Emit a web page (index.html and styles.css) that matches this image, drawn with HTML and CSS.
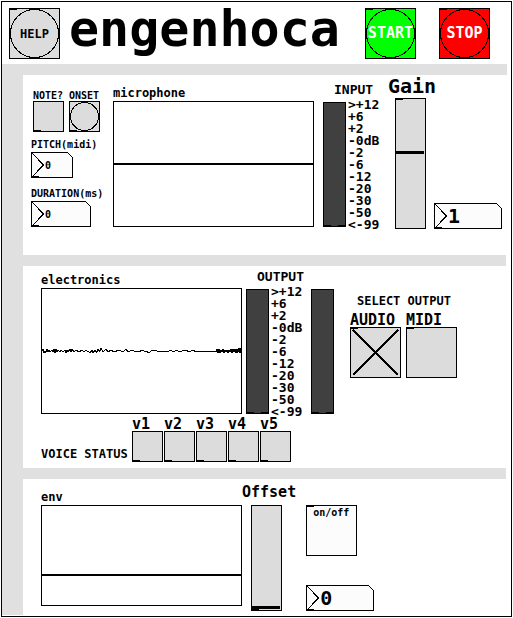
FILE: index.html
```html
<!DOCTYPE html>
<html lang="en">
<head>
<meta charset="utf-8">
<title>engenhoca</title>
<link rel="stylesheet" href="styles.css">
</head>
<body>
<div class="patch">
  <header class="header">
    <button class="bang bang-large mark-top">
      <svg class="ring" viewBox="0 0 49 49"><circle cx="24.5" cy="24.5" r="24"/></svg>
      <span class="text-12">HELP</span>
    </button>
    <h1 class="title">engenhoca</h1>
    <div class="transport">
      <button class="bang bang-large mark-top start">
        <svg class="ring" viewBox="0 0 49 49"><circle cx="24.5" cy="24.5" r="24"/></svg>
        <span class="text-15">START</span>
      </button>
      <button class="bang bang-large mark-top stop">
        <svg class="ring" viewBox="0 0 49 49"><circle cx="24.5" cy="24.5" r="24"/></svg>
        <span class="text-15">STOP</span>
      </button>
    </div>
  </header>

  <main class="panels">
    <section class="panel panel-input">
      <div class="sensors">
        <div class="detectors">
          <div class="field">
            <label class="text-10" for="note">NOTE?</label>
            <input class="toggle toggle-small mark-bottom" type="checkbox" id="note">
          </div>
          <div class="field">
            <label class="text-10" for="onset">ONSET</label>
            <button class="bang bang-small mark-bottom" id="onset" aria-label="ONSET">
              <svg class="ring" viewBox="0 0 29 29"><circle cx="14.5" cy="14.5" r="14"/></svg>
            </button>
          </div>
        </div>
        <label class="text-10 reading-label" for="pitch">PITCH(midi)</label>
        <div class="number number-short">
          <svg class="number-shape" viewBox="0 0 42 26"><path class="face" d="M.5 .5H36.500L41.500 5.500V25.500H.5Z"/><path d="M.5 .5L12.500 13L.5 25.500"/><path class="mark" d="M1 24h7v1H1z"/></svg>
          <input class="number-value text-10" type="text" id="pitch" value="0">
        </div>
        <label class="text-10 reading-label duration-label" for="duration">DURATION(ms)</label>
        <div class="number number-medium">
          <svg class="number-shape" viewBox="0 0 60 26"><path class="face" d="M.5 .5H54.500L59.500 5.500V25.500H.5Z"/><path d="M.5 .5L12.500 13L.5 25.500"/><path class="mark" d="M1 24h7v1H1z"/></svg>
          <input class="number-value text-10" type="text" id="duration" value="0">
        </div>
      </div>

      <figure class="scope scope-input">
        <figcaption class="text-12">microphone</figcaption>
        <svg class="screen" viewBox="0 0 201 126"><path class="trace" d="M0 63H201"/></svg>
      </figure>

      <div class="levels levels-input">
        <div class="text-13 levels-label">INPUT</div>
        <div class="levels-row">
          <div class="vu" role="meter" aria-label="Input level" aria-valuenow="-99" aria-valuemin="-99" aria-valuemax="12"></div>
          <ul class="scale">
            <li>&gt;+12</li><li>+6</li><li>+2</li><li>-0dB</li><li>-2</li><li>-6</li><li>-12</li><li>-20</li><li>-30</li><li>-50</li><li>&lt;-99</li>
          </ul>
        </div>
      </div>

      <div class="gain">
        <label class="gain-label" for="gain">Gain</label>
        <div class="gain-row">
          <input class="slider slider-tall mark-top" type="range" id="gain" min="0" max="100" value="59">
          <div class="number number-long">
            <svg class="number-shape" viewBox="0 0 68 26"><path class="face" d="M.5 .5H62.500L67.500 5.500V25.500H.5Z"/><path d="M.5 .5L12.500 13L.5 25.500"/><path class="mark" d="M1 24h7v1H1z"/></svg>
            <input class="number-value text-20" type="text" value="1" aria-label="Gain value">
          </div>
        </div>
      </div>
    </section>

    <section class="panel panel-output">
      <div class="synth">
        <div class="monitor">
          <figure class="scope scope-output">
            <figcaption class="text-12">electronics</figcaption>
            <svg class="screen" viewBox="0 0 201 126"><path class="noise" d="M1 62.500L2 61.500 3 64.500 4 63.500 5 64.500 6 61.500 7 63.500 8 62.500 9 63.500 11 62.500 12 63.500 13 61.500 14 64.500 15 61.500 16 63.500 17 62.500 19 63.500 20 62.500 22 63.500 24 62.500 25 64.500 26 62.500 27 63.500 29 61.500 30 63.500 31 61.500 33 63.500 35 62.500 38 63.500 41 62.500 43 63.500 45 62.500 47 63.500 49 64.500 51 62.500 52 64.500 54 62.500 56 64.500 57 61.500 59 63.500 60 60.500 62 63.500 65 61.500 67 63.500 70 62.500 73 63.500 78 62.500 82 63.500 85 61.500 87 63.500 91 62.500 95 63.500 98 63.500 101 62.500 105 63.500 108 64.500 111 62.500 114 62.500 118 63.500 126 63.500 130 62.500 132 63.500 136 62.500 138 63.500 145 62.500 148 63.500 152 62.500 155 63.500 175 63.500 176 61.500 177 64.500 178 61.500 179 64.500 180 62.500 181 63.500 182 61.500 183 64.500 184 62.500 185 63.500 186 62.500 187 64.500 188 62.500 189 63.500 190 61.500 191 64.500 192 61.500 193 63.500 194 61.500 195 64.500 196 61.500 197 64.500 198 60.500 199 64.500 200 60.500"/></svg>
          </figure>
          <div class="levels levels-output">
            <div class="text-13 levels-label">OUTPUT</div>
            <div class="levels-row">
              <div class="vu" role="meter" aria-label="Left output level" aria-valuenow="-99" aria-valuemin="-99" aria-valuemax="12"></div>
              <ul class="scale">
                <li>&gt;+12</li><li>+6</li><li>+2</li><li>-0dB</li><li>-2</li><li>-6</li><li>-12</li><li>-20</li><li>-30</li><li>-50</li><li>&lt;-99</li>
              </ul>
              <div class="vu vu-right" role="meter" aria-label="Right output level" aria-valuenow="-99" aria-valuemin="-99" aria-valuemax="12"></div>
            </div>
          </div>
        </div>
        <div class="voices">
          <div class="text-12 voices-label">VOICE STATUS</div>
          <div class="field"><label class="text-15" for="v1">v1</label><input class="toggle toggle-small mark-bottom" type="checkbox" id="v1"></div>
          <div class="field"><label class="text-15" for="v2">v2</label><input class="toggle toggle-small mark-bottom" type="checkbox" id="v2"></div>
          <div class="field"><label class="text-15" for="v3">v3</label><input class="toggle toggle-small mark-bottom" type="checkbox" id="v3"></div>
          <div class="field"><label class="text-15" for="v4">v4</label><input class="toggle toggle-small mark-bottom" type="checkbox" id="v4"></div>
          <div class="field"><label class="text-15" for="v5">v5</label><input class="toggle toggle-small mark-bottom" type="checkbox" id="v5"></div>
        </div>
      </div>

      <div class="select-output">
        <div class="text-12 select-label">SELECT OUTPUT</div>
        <div class="select-row">
          <div class="field">
            <label class="text-15" for="audio">AUDIO</label>
            <div class="stack">
              <input class="toggle toggle-large mark-top" type="checkbox" id="audio" checked>
              <svg class="cross" viewBox="0 0 51 51"><path d="M3 3L48 48M48 3L3 48"/></svg>
            </div>
          </div>
          <div class="field">
            <label class="text-15" for="midi">MIDI</label>
            <div class="stack">
              <input class="toggle toggle-large mark-top" type="checkbox" id="midi">
              <svg class="cross" viewBox="0 0 51 51"><path d="M3 3L48 48M48 3L3 48"/></svg>
            </div>
          </div>
        </div>
      </div>
    </section>

    <section class="panel panel-env">
      <figure class="scope scope-env">
        <figcaption class="text-12">env</figcaption>
        <svg class="screen" viewBox="0 0 201 101"><path class="trace" d="M0 70H201"/></svg>
      </figure>
      <div class="offset">
        <label class="offset-label" for="offset">Offset</label>
        <input class="slider slider-short mark-bottom" type="range" id="offset" min="0" max="100" value="1">
      </div>
      <div class="env-controls">
        <div class="stack">
          <input class="toggle toggle-large toggle-light mark-top" type="checkbox" id="onoff">
          <label class="text-10 onoff-label" for="onoff">on/off</label>
        </div>
        <div class="number number-long">
          <svg class="number-shape" viewBox="0 0 68 26"><path class="face" d="M.5 .5H62.500L67.500 5.500V25.500H.5Z"/><path d="M.5 .5L12.500 13L.5 25.500"/><path class="mark" d="M1 24h7v1H1z"/></svg>
          <input class="number-value text-20" type="text" value="0" aria-label="Offset value">
        </div>
      </div>
    </section>
  </main>
</div>
</body>
</html>
```
FILE: styles.css
```css
* {
  box-sizing: border-box;
}

body {
  margin: 1px;
  background: #fff;
  color: #000;
  font-family: "DejaVu Sans Mono", "Liberation Mono", monospace;
  font-weight: bold;
}

button,
input {
  margin: 0;
  padding: 0;
  color: inherit;
  font-family: inherit;
  font-weight: inherit;
}

svg {
  display: block;
  shape-rendering: crispEdges;
}

.patch {
  border: 1px solid #000;
  padding-bottom: 1px;
}

/* Type sizes */
.text-10 { font-size: 10px; line-height: 11px; }
.text-12 { font-size: 12px; line-height: 14px; }
.text-13 { font-size: 13px; line-height: 16px; }
.text-15 { font-size: 15px; line-height: 13px; }
.text-20 { font-size: 20px; line-height: 24px; }

/* Header */
.header {
  display: flex;
  align-items: flex-start;
  padding: 0 7px;
}

.header .bang {
  margin: 6px 0 5px;
}

.title {
  margin: 0 25px 0 9px;
  font-size: 50px;
  line-height: 54px;
}

.transport {
  display: flex;
  gap: 23px;
}

/* Panels */
.panels {
  margin-right: 4px;
  border-left: 21px solid #e0e0e0;
}

.panel {
  display: flex;
  align-items: flex-start;
  border-top: 11px solid #e0e0e0;
}

.panel + .panel {
  margin-right: 1px;
  padding-left: 18px;
}

.panel-input { padding: 0 0 24px 8px; }
.panel-output { padding-bottom: 6px; }
.panel-env { padding-bottom: 4px; }

/* Widgets */
.bang,
.toggle,
.slider {
  appearance: none;
  flex: none;
  display: block;
  border: 1px solid #000;
  border-radius: 0;
  background-color: #dcdcdc;
  background-image: linear-gradient(#000, #000);
  background-repeat: no-repeat;
  background-size: 7px 1px;
}

.mark-top { background-position: left top; }
.mark-bottom { background-position: left bottom; }

.bang {
  display: grid;
  place-items: center;
}

.bang > * {
  grid-area: 1 / 1;
}

.bang-large,
.toggle-large {
  width: 51px;
  height: 51px;
}

.bang-small,
.toggle-small {
  width: 31px;
  height: 31px;
}

.start {
  background-color: #0f0;
  color: #fff;
}

.stop {
  background-color: #f00;
  color: #fff;
}

.ring {
  width: 100%;
  height: 100%;
  fill: none;
  stroke: #000;
}

.toggle-light {
  background-color: #fcfcfc;
}

.field {
  display: flex;
  flex-direction: column;
}

.stack {
  display: grid;
  justify-items: start;
  align-items: start;
}

.stack > * {
  grid-area: 1 / 1;
}

.cross {
  display: none;
  width: 51px;
  height: 51px;
  stroke: #000;
  stroke-width: 2;
  pointer-events: none;
}

.toggle:checked + .cross {
  display: block;
}

.slider {
  width: 31px;
  writing-mode: vertical-lr;
  direction: rtl;
}

.slider-tall { height: 131px; }
.slider-short { height: 106px; }

.slider::-webkit-slider-thumb {
  appearance: none;
  width: 28px;
  height: 3px;
  margin-right: 1px;
  background: #000;
}

.number {
  display: grid;
  height: 26px;
}

.number > * {
  grid-area: 1 / 1;
}

.number-short { width: 42px; }
.number-medium { width: 60px; }
.number-long { width: 68px; }

.number-shape {
  width: 100%;
  height: 26px;
  fill: none;
  stroke: #000;
}

.number-shape .face { fill: #fcfcfc; }

.number-shape .mark {
  fill: #000;
  stroke: none;
}

.number-value {
  width: 100%;
  height: 26px;
  padding-left: 14px;
  border: 0;
  background: transparent;
}

.scope {
  flex: none;
  display: grid;
  gap: 1px;
  margin: 0;
}

.screen {
  width: 201px;
  outline: 1px solid #000;
  outline-offset: -1px;
}

.trace {
  stroke: #000;
  stroke-width: 2;
}

.noise {
  fill: none;
  stroke: #000;
}

.levels-label {
  padding-left: 11px;
}

.levels-row {
  display: flex;
  align-items: flex-start;
  margin-top: 1px;
}

.vu {
  width: 23px;
  height: 125px;
  margin: 3px 2px 0 0;
  border: 1px solid #000;
  background:
    linear-gradient(#000, #000) left bottom / 7px 1px no-repeat,
    linear-gradient(#000, #000) right bottom / 7px 1px no-repeat,
    #404040;
}

.vu-right {
  margin: 3px 0 0 8px;
}

.scale {
  width: 32px;
  margin: 0;
  padding: 0;
  list-style: none;
  font-size: 13px;
  line-height: 12px;
  white-space: nowrap;
}

/* Input panel */
.sensors {
  width: 82px;
  margin-top: 15px;
}

.detectors {
  display: flex;
  gap: 5px;
  padding-left: 2px;
}

.reading-label {
  display: block;
  margin: 7px 0 2px;
}

.duration-label {
  margin-top: 10px;
}

.scope-input { margin-top: 11px; }
.levels-input { margin: 7px 8px 0 9px; }

.gain-label {
  display: block;
  font-size: 20px;
  line-height: 22px;
}

.gain-row {
  display: flex;
  align-items: flex-end;
  gap: 8px;
  margin: 1px 0 0 7px;
}

/* Output panel */
.monitor {
  display: flex;
  align-items: flex-start;
}

.scope-output { margin-top: 7px; }
.levels-output { margin: 3px 0 0 4px; }

.voices {
  display: flex;
  align-items: flex-end;
  gap: 1px;
}

.voices-label {
  width: 90px;
  margin-bottom: 1px;
}

.select-output { margin: 28px 0 0 16px; }

.select-label {
  padding-left: 7px;
  margin-bottom: 6px;
}

.select-row {
  display: flex;
  gap: 5px;
}

/* Envelope panel */
.scope-env { margin-top: 11px; }

.offset { margin: 5px 10px 0 0; }

.offset-label {
  display: block;
  margin-bottom: 5px;
  font-size: 15px;
  line-height: 16px;
}

.offset .slider { margin-left: 9px; }

.env-controls {
  display: grid;
  gap: 29px;
  margin-top: 26px;
}

.onoff-label { margin: 2px 0 0 7px; }
```
